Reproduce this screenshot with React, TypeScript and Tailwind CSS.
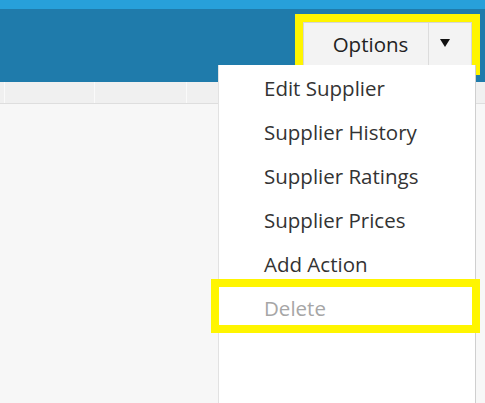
import React from "react";

const items = [
  "Edit Supplier",
  "Supplier History",
  "Supplier Ratings",
  "Supplier Prices",
  "Add Action",
];

export default function App() {
  return (
    <div
      className="relative w-[485px] h-[403px] overflow-hidden bg-[#f7f7f7]"
      style={{ fontFamily: '"Open Sans", "Noto Sans", sans-serif' }}
    >
      {/* top bar */}
      <div className="h-[9px] bg-[#27a0da]" />
      <div className="h-[73px] bg-[#1f7bab] flex justify-end pt-[5px] pr-[5px]">
        <div className="h-[61px] border-[8px] border-[#fff500]">
          <div className="flex h-[45px] bg-[#f3f3f3] border border-[#d6d6d6]">
            <button className="w-[124px] pl-[9px] text-[20.5px] leading-none text-[#222]">
              Options
            </button>
            <div className="w-[43px] border-l border-[#dcdcdc] flex items-start justify-start pl-[11px] pt-[16px]">
              <svg width="10" height="8" viewBox="0 0 10 8">
                <path d="M0 0 H10 L5 8 Z" fill="#111" />
              </svg>
            </div>
          </div>
        </div>
      </div>

      {/* grid header strip */}
      <div className="h-[22px] bg-[#f0f0f0] border-b border-[#dedede] flex">
        <div className="w-[5px] border-r border-[#fafafa]" />
        <div className="w-[90px] border-r border-[#fafafa]" />
        <div className="w-[92px] border-r border-[#fafafa]" />
      </div>

      {/* dropdown menu */}
      <div className="absolute left-[218px] top-[65px] w-[258px] bottom-0 bg-white border-l border-[#e2e2e2] border-r border-r-[#cfcfcf] pt-[1px]">
        {items.map((t) => (
          <div
            key={t}
            className="h-[44px] flex items-center pl-[45px] text-[20.5px] text-[#333]"
          >
            {t}
          </div>
        ))}
        <div className="relative h-[44px] flex items-center pl-[45px] text-[20.5px] text-[#a6a6a6]">
          Delete
          <div className="absolute left-[-8px] right-[-5px] top-[-7px] bottom-[-3px] border-[8px] border-[#fff500]" />
        </div>
      </div>
    </div>
  );
}
